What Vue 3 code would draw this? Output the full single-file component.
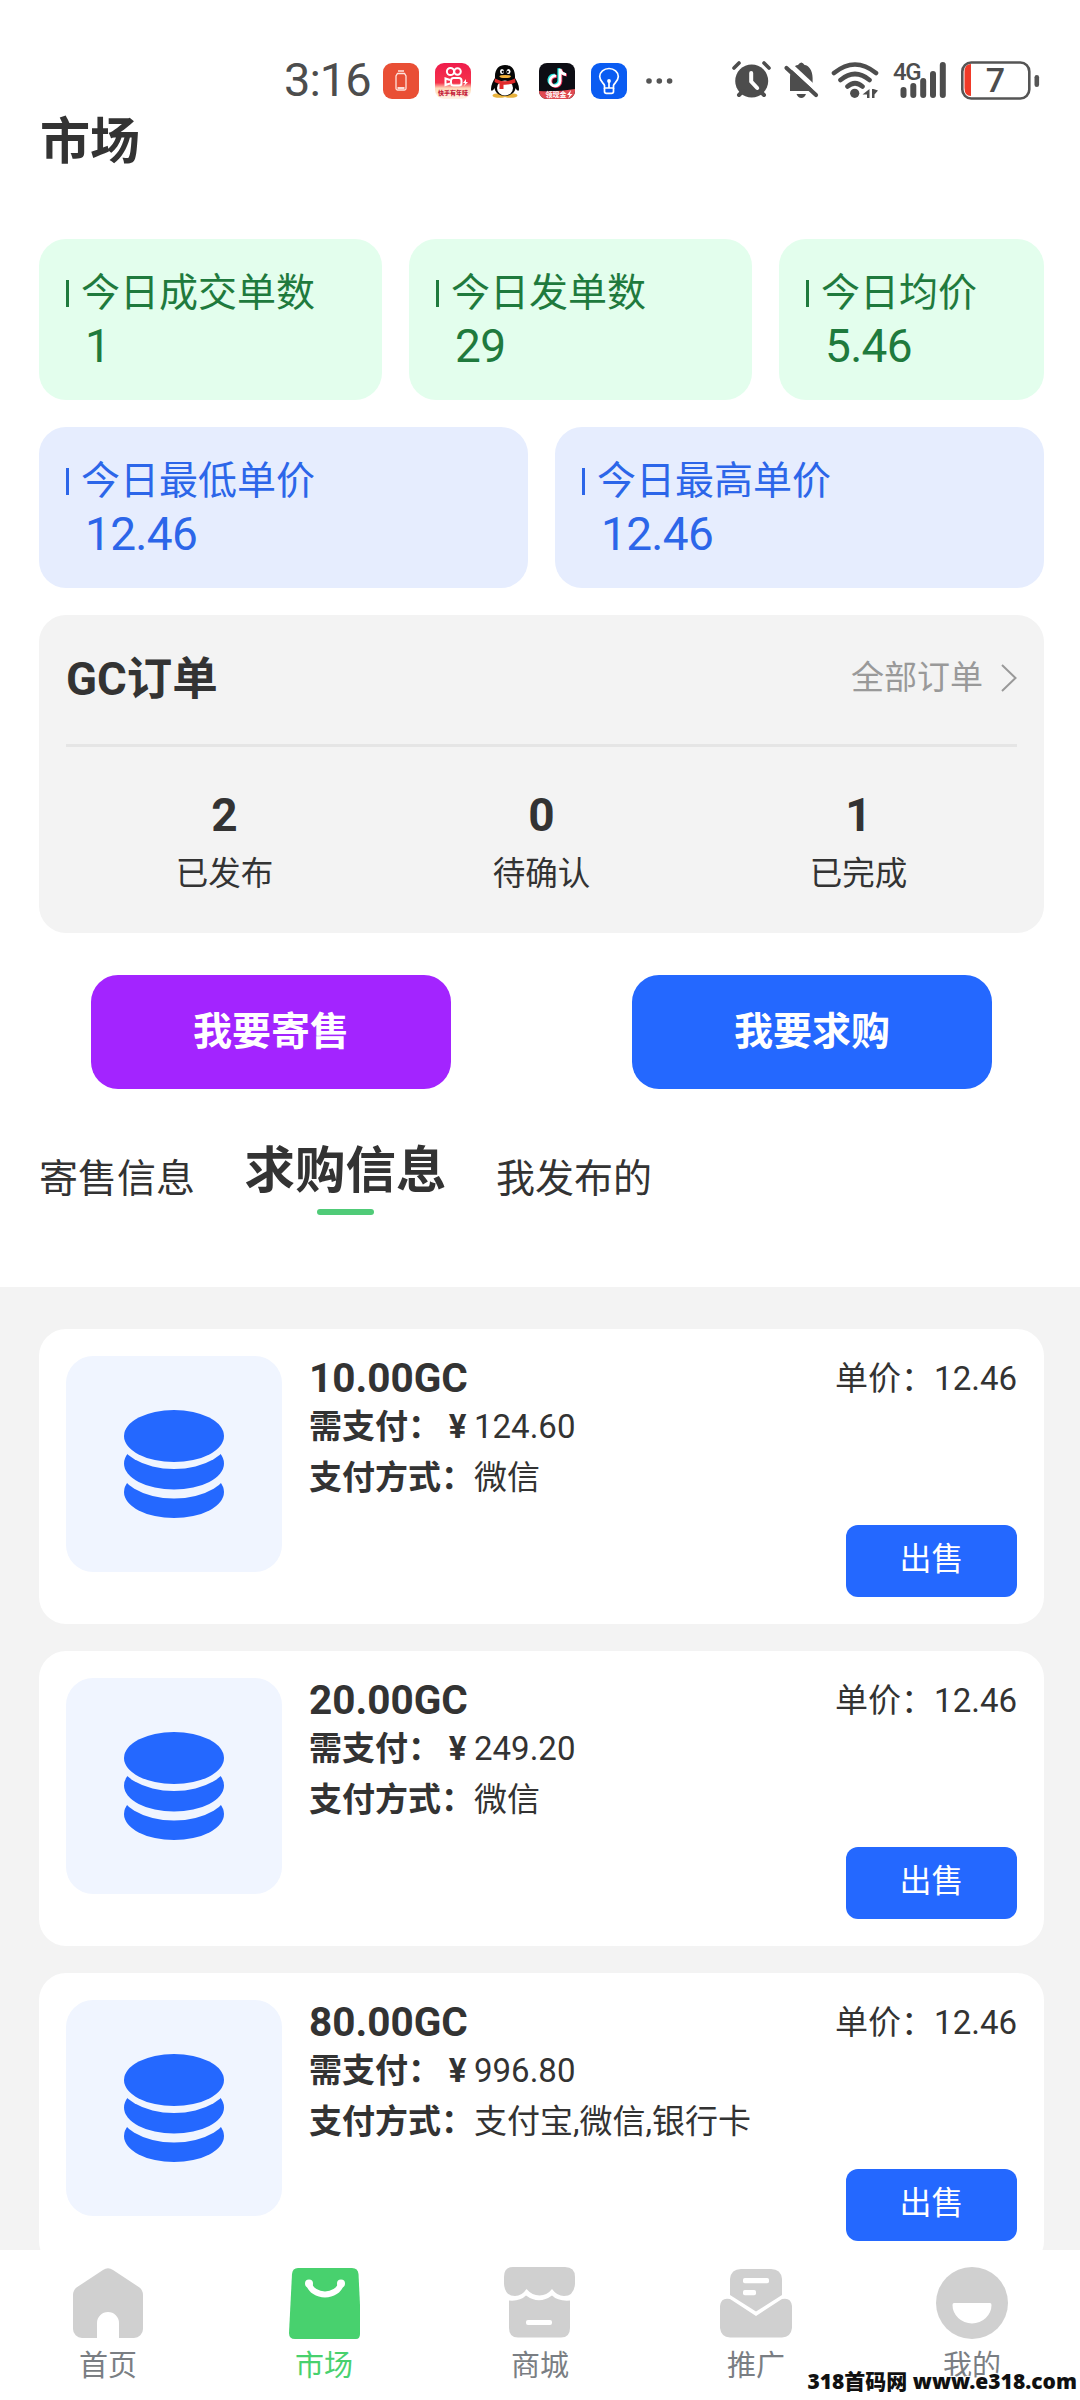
<script setup>
const dayStats = [
  { label: '今日成交单数', value: '1', width: 343 },
  { label: '今日发单数', value: '29', width: 343 },
  { label: '今日均价', value: '5.46', width: 265 },
]
const priceStats = [
  { label: '今日最低单价', value: '12.46' },
  { label: '今日最高单价', value: '12.46' },
]
const orderCounts = [
  { label: '已发布', value: 2 },
  { label: '待确认', value: 0 },
  { label: '已完成', value: 1 },
]
const offers = [
  { amount: '10.00GC', pay: '124.60', method: '微信', price: '12.46' },
  { amount: '20.00GC', pay: '249.20', method: '微信', price: '12.46' },
  { amount: '80.00GC', pay: '996.80', method: '支付宝,微信,银行卡', price: '12.46' },
]
</script>

<template>
  <div class="page">
    <div class="status">
      <span class="clock">3:16</span>
      <div class="apps">
        <svg width="36" height="36" viewBox="0 0 36 36">
          <rect width="36" height="36" rx="9" fill="#e94f35" />
          <path d="M15 8h6M14.500 10.500h7l1.500 2.500v12.500q0 1.500-1.500 1.500h-7q-1.500 0-1.500-1.500V13z" fill="none" stroke="#ffe3dc" stroke-width="1.300" />
          <path d="M14.500 25h7" stroke="#fff" stroke-width="1.600" />
        </svg>
        <svg width="36" height="36" viewBox="0 0 36 36">
          <defs>
            <linearGradient id="ks" x1="0" y1="0" x2="0" y2="1">
              <stop offset="0" stop-color="#ef1c4c" />
              <stop offset=".55" stop-color="#f5334b" />
              <stop offset=".7" stop-color="#ffd9b8" />
              <stop offset="1" stop-color="#fff3e6" />
            </linearGradient>
          </defs>
          <rect width="36" height="36" rx="9" fill="url(#ks)" />
          <g fill="none" stroke="#fff" stroke-width="2">
            <circle cx="15.500" cy="8.500" r="3.600" />
            <circle cx="22.500" cy="8.500" r="3.300" />
            <rect x="16" y="15" width="10.500" height="7.500" rx="2.500" />
            <path d="M15 17l-4.500-1.500v6.500L15 20.500" />
          </g>
          <path d="M31 16l-3 4h2l-1 3 4-4h-2z" fill="#fff" />
          <text x="18" y="32" class="ks-text">快手有年味</text>
        </svg>
        <svg width="36" height="36" viewBox="0 0 36 36">
          <ellipse cx="12.500" cy="32.500" rx="7" ry="2.300" fill="#e8b23c" />
          <ellipse cx="23.500" cy="32.500" rx="7" ry="2.300" fill="#e8b23c" />
          <path d="M8 15C7.500 6 12 2 18 2s10.500 4 10 13c2 3 4 7 4 11 0 3-2 2-3.500-1C28 30 23 33 18 33S8 30 7.500 25C6 28 4 29 4 26c0-4 2-8 4-11z" fill="#060606" />
          <ellipse cx="18" cy="25" rx="8" ry="7.500" fill="#fff" />
          <ellipse cx="15" cy="8.500" rx="2" ry="2.600" fill="#fff" />
          <ellipse cx="21.500" cy="8.500" rx="2" ry="2.600" fill="#fff" />
          <circle cx="15.700" cy="8.800" r="1.100" fill="#000" />
          <circle cx="20.800" cy="8.800" r="1.100" fill="#000" />
          <ellipse cx="18.200" cy="13.500" rx="5.800" ry="1.600" fill="#f2b13a" />
          <path d="M8 15.500q10 5.500 20 0l.5 4q-5 2.500-12 2.200v4.300h-4v-5.200q-3-.5-5-1.800z" fill="#e02a2a" />
        </svg>
        <svg width="36" height="36" viewBox="0 0 36 36">
          <defs><clipPath id="dy"><rect width="36" height="36" rx="8" /></clipPath></defs>
          <g clip-path="url(#dy)">
            <rect width="36" height="36" fill="#0d0d14" />
            <g fill="none" stroke-width="2.800">
              <path d="M17 13a5 5 0 1 0 4 5V6q1 5 6 5.500" stroke="#25e6e0" transform="translate(-1.200 -.8)" />
              <path d="M17 13a5 5 0 1 0 4 5V6q1 5 6 5.500" stroke="#f4325c" transform="translate(.9 .6)" />
              <path d="M17 13a5 5 0 1 0 4 5V6q1 5 6 5.500" stroke="#fff" />
            </g>
            <path d="M0 28Q18 29 36 26v10H0z" fill="#e04a51" />
            <text x="17" y="34" class="dy-text">领现金</text>
            <path d="M32 27l-4 5h2.500l-1.500 4 4.500-5H31z" fill="#fff" />
          </g>
        </svg>
        <svg width="36" height="36" viewBox="0 0 36 36">
          <rect width="36" height="36" rx="9" fill="#0a5cf2" />
          <g fill="none" stroke="#fff" stroke-width="1.700">
            <path d="M13.500 25v-2.500c-.3-2-4.800-4-4.800-9a9.300 8 0 0 1 18.600 0c0 5-4.500 7-4.800 9V25z" />
            <path d="M13.500 25v3.500q0 1.800 2 1.800h5q2 0 2-1.800V25M18 18v7" />
          </g>
          <circle cx="18" cy="18" r="1.900" fill="#fff" />
        </svg>
      </div>
      <svg class="more" width="28" height="8" viewBox="0 0 28 8" fill="#555">
        <circle cx="4" cy="4" r="2.800" /><circle cx="14.300" cy="4" r="2.800" /><circle cx="24.600" cy="4" r="2.800" />
      </svg>
      <svg class="system" width="310" height="52" viewBox="0 -6 310 52" fill="none">
        <g stroke="#4d4d4d" stroke-linecap="round">
          <circle cx="20.700" cy="21" r="16.500" fill="#4d4d4d" stroke="none" />
          <path d="M3 8l5-5M38 8l-5-5" stroke-width="3.600" />
          <path d="M8 35l4-4M33 35l-4-4" stroke-width="4" />
          <path d="M20.200 13v8.500l6 6.500" stroke="#fff" stroke-width="4" />
        </g>
        <path d="M59 31V18c0-8 4-12.500 8-13q3.300-5 6.600 0c4 .5 8 5 8 13v13z" fill="#4d4d4d" />
        <path d="M65.500 34h9.500q-1.500 4-4.700 4t-4.800-4z" fill="#4d4d4d" />
        <path d="M57 3l30 28" stroke="#fff" stroke-width="5" />
        <path d="M55.500 8l29.500 27" stroke="#4d4d4d" stroke-width="4.200" stroke-linecap="round" />
        <g stroke="#4d4d4d" stroke-width="4.600" stroke-linecap="round">
          <path d="M103 13q21-17 42 0M109.500 20q14.500-12 29 0M116.500 26.500q7.500-6.500 15 0" />
        </g>
        <circle cx="123.700" cy="33.300" r="4.600" fill="#4d4d4d" />
        <path d="M138.500 29v9h-2.500v-3.500h-4.500zM141 38v-9h1.500l4.500 1.500-3.500 4V38z" fill="#4d4d4d" />
        <text x="162" y="19.500" class="net">4G</text>
        <g stroke="#4d4d4d" stroke-width="6" stroke-linecap="round">
          <path d="M172.500 30v5M182.300 26v9M192.200 21v14M202 14v21M211.800 5v30" />
        </g>
        <path d="M240 4v32q-6.500 0-6.500-8V12q0-8 6.500-8z" fill="#f03a28" />
        <rect x="231.300" y="2.500" width="67" height="36" rx="9" stroke="#555" stroke-width="2.600" />
        <rect x="303.500" y="15" width="4.600" height="12" rx="2.300" fill="#555" />
        <text x="264.500" y="32" class="level">7</text>
      </svg>
    </div>

    <h1 class="title">市场</h1>

    <div class="summary">
      <div class="row">
        <div v-for="s in dayStats" :key="s.label" class="stat green" :style="{ width: s.width + 'px' }">
          <div class="stat-label"><i></i>{{ s.label }}</div>
          <div class="stat-value">{{ s.value }}</div>
        </div>
      </div>
      <div class="row">
        <div v-for="s in priceStats" :key="s.label" class="stat blue">
          <div class="stat-label"><i></i>{{ s.label }}</div>
          <div class="stat-value">{{ s.value }}</div>
        </div>
      </div>
      <section class="orders">
        <header>
          <h2>GC订单</h2>
          <a>全部订单
            <svg width="16" height="28" viewBox="0 0 16 28" fill="none" stroke="#999" stroke-width="2"><path d="M1 1l13.500 13L1 27" /></svg>
          </a>
        </header>
        <div class="counts">
          <div v-for="o in orderCounts" :key="o.label">
            <b>{{ o.value }}</b>
            <span>{{ o.label }}</span>
          </div>
        </div>
      </section>
    </div>

    <div class="actions">
      <button class="consign">我要寄售</button>
      <button class="buy">我要求购</button>
    </div>

    <div class="tabs">
      <span>寄售信息</span>
      <span class="active">求购信息</span>
      <span>我发布的</span>
    </div>

    <div class="list">
      <article v-for="o in offers" :key="o.amount" class="offer">
        <div class="thumb">
          <svg width="100" height="108" viewBox="0 0 100 108" fill="#2468ff">
            <ellipse cx="50" cy="82" rx="50" ry="26" />
            <ellipse cx="50" cy="55" rx="56" ry="33.500" fill="#f0f5ff" />
            <ellipse cx="50" cy="53.500" rx="50" ry="26" />
            <ellipse cx="50" cy="26" rx="56" ry="33" fill="#f0f5ff" />
            <ellipse cx="50" cy="26" rx="50" ry="26" />
          </svg>
        </div>
        <div class="info">
          <h3>{{ o.amount }}</h3>
          <p class="pay"><b>需支付：</b><b class="yen">¥</b>{{ o.pay }}</p>
          <p class="method"><b>支付方式：</b>{{ o.method }}</p>
        </div>
        <div class="side">
          <span>单价：{{ o.price }}</span>
          <button>出售</button>
        </div>
      </article>
    </div>

    <nav class="tabbar">
      <div>
        <svg viewBox="0 0 72 72" fill="#d0d0d0">
          <path d="M25 71H10a9 9 0 0 1-9-9V28q0-4.500 3.500-7.500L31 3q5-3.500 10 0l26.500 17.500Q71 23.500 71 28v34a9 9 0 0 1-9 9H47V56a11 11 0 0 0-22 0z" />
        </svg>
        <span>首页</span>
      </div>
      <div class="on">
        <svg viewBox="0 0 72 72">
          <path d="M10 1h54q6 0 6.500 6L72 38v29q0 5-4 5H7q-6 0-6-6L4 7q.5-6 6-6z" fill="#48d16e" />
          <path d="M21 17a16.500 14 0 0 0 32 0" fill="none" stroke="#fff" stroke-width="6" />
          <circle cx="21" cy="16.500" r="4" fill="#fff" /><circle cx="53" cy="16.500" r="4" fill="#fff" />
        </svg>
        <span>市场</span>
      </div>
      <div>
        <svg viewBox="0 0 72 72" fill="#d0d0d0">
          <path d="M9 0h52q10 0 10 10v7q-1 12-11 12-7 0-12-7-5 6.500-12.500 6.500T22.500 22q-4.500 7-11.500 7Q1 29 0 17v-7Q0 0 9 0z" />
          <path d="M5 33.500q11 1 17-5 13 9.500 26 0 6 6 18 5V61q0 9.500-9 9.500H14q-9 0-9-9.500z" />
          <rect x="22" y="53" width="26" height="5" rx="2" fill="#fff" />
        </svg>
        <span>商城</span>
      </div>
      <div>
        <svg viewBox="0 0 72 72" fill="#d0d0d0">
          <path d="M10 12Q11 2 21 2h30q10 0 11 10v16L36 44.500 10 28z" />
          <path d="M0 39q1-9 10-7l26 17 26-17q9-2 10 7v22q-1 9-10 9.500H10Q1 70 0 61z" />
          <rect x="23" y="11" width="26" height="5.300" rx="1.800" fill="#fff" />
          <rect x="23" y="23" width="13" height="5.300" rx="1.800" fill="#fff" />
        </svg>
        <span>推广</span>
      </div>
      <div>
        <svg viewBox="0 0 72 72" fill="#d0d0d0">
          <circle cx="36" cy="36" r="36" />
          <path d="M18 36h36q1.500 0 1.500 2a19.500 18.500 0 0 1-39 0q0-2 1.500-2z" fill="#fff" />
        </svg>
        <span>我的</span>
      </div>
    </nav>
    <div class="watermark">318首码网 <em>www.e318.com</em></div>
  </div>
</template>

<style>
body {
  margin: 0;
  background: #fff;
}
</style>

<style scoped>
.page {
  position: relative;
  display: flex;
  flex-direction: column;
  width: 1080px;
  height: 2400px;
  overflow: hidden;
  background: #fff;
  color: #333;
  font-family: Roboto, "Noto Sans CJK SC", sans-serif;
}
h1, h2, h3, p { margin: 0; }
button {
  display: block;
  padding: 0;
  border: 0;
  color: #fff;
  font-family: inherit;
}
svg { display: block; flex: none; }

.status {
  display: flex;
  align-items: center;
  box-sizing: border-box;
  height: 110px;
  padding: 50px 0 0 284px;
}
.clock {
  width: 99px;
  font-size: 47px;
  line-height: 60px;
  letter-spacing: -1px;
  color: #4d4d4d;
}
.apps { display: flex; gap: 16px; margin-top: 2px; }
.more { margin-left: 18px; margin-top: 1px; }
.system { margin-left: 58px; }
.ks-text { font-size: 6px; font-weight: 900; fill: #c4203a; text-anchor: middle; }
.dy-text { font-size: 7px; font-weight: 700; fill: #fff; text-anchor: middle; }
.net { font-size: 24px; font-weight: 500; fill: #4d4d4d; letter-spacing: -1.500px; }
.level { font-size: 34px; font-weight: 500; fill: #4d4d4d; text-anchor: middle; }

.title {
  height: 129px;
  padding-left: 40px;
  font-size: 50px;
  line-height: 64px;
}
.summary {
  display: flex;
  flex-direction: column;
  gap: 27px;
  width: 1005px;
  margin-left: 39px;
}
.row { display: flex; gap: 27px; }
.stat {
  box-sizing: border-box;
  height: 161px;
  padding: 34px 27px 0;
  border-radius: 27px;
}
.green { background: #e3feed; color: #1f7a3d; }
.blue { flex: 1; background: #e6edfe; color: #2c66e9; }
.stat-label {
  display: flex;
  align-items: center;
  gap: 12px;
  font-size: 39px;
  line-height: 41px;
  height: 40px;
  white-space: nowrap;
}
.stat-label i { width: 3px; height: 27px; background: currentColor; margin-top: 1px; }
.stat-value {
  margin: 8px 0 0 19px;
  font-size: 46px;
  line-height: 50px;
  letter-spacing: -0.700px;
}
.orders {
  box-sizing: border-box;
  height: 318px;
  padding: 0 27px;
  border-radius: 27px;
  background: #f3f3f3;
}
.orders header {
  display: flex;
  justify-content: space-between;
  align-items: center;
  height: 129px;
  border-bottom: 3px solid #e5e5e5;
}
.orders h2 { font-size: 45.500px; line-height: 60px; }
.orders a {
  display: flex;
  align-items: center;
  gap: 18px;
  font-size: 33px;
  line-height: 40px;
  margin-bottom: 3px;
  color: #999;
}
.counts { display: flex; padding-top: 43px; }
.counts div {
  flex: 1;
  display: flex;
  flex-direction: column;
  align-items: center;
}
.counts b { font-size: 46px; line-height: 50px; }
.counts span { margin-top: 14px; font-size: 32.500px; line-height: 40px; }

.actions { display: flex; gap: 181px; padding: 42px 0 0 91px; }
.actions button {
  width: 360px;
  height: 114px;
  border-radius: 27px;
  font-size: 39px;
  font-weight: 700;
  line-height: 114px;
}
.consign { background: #a324ff; }
.buy { background: #2468ff; }

.tabs {
  display: flex;
  align-items: flex-end;
  gap: 49.500px;
  box-sizing: border-box;
  height: 198px;
  padding: 0 0 72px 39px;
  font-size: 39px;
  line-height: 71px;
}
.tabs .active { font-size: 50.500px; font-weight: 700; line-height: 70px; }
.tabs .active::after {
  content: "";
  display: block;
  width: 57px;
  height: 6px;
  margin: 3px auto 0;
  border-radius: 3px;
  background: #50cb78;
}

.list {
  flex: 1;
  display: flex;
  flex-direction: column;
  gap: 27px;
  min-height: 0;
  overflow: hidden;
  padding: 42px 36px 0 39px;
  background: #f3f3f3;
}
.offer {
  flex: none;
  display: flex;
  box-sizing: border-box;
  height: 295px;
  padding: 27px;
  border-radius: 27px;
  background: #fff;
  font-size: 33px;
}
.thumb {
  display: flex;
  align-items: center;
  justify-content: center;
  width: 216px;
  height: 216px;
  margin-right: 27px;
  border-radius: 27px;
  background: #f0f5ff;
}
.info { flex: 1; white-space: nowrap; }
.info h3 { font-size: 40.500px; line-height: 45px; height: 46px; }
.pay { line-height: 50px; }
.method { line-height: 52px; }
.yen { display: inline-block; width: 33px; text-align: center; }
.side {
  display: flex;
  flex-direction: column;
  align-items: flex-end;
  justify-content: space-between;
  line-height: 46px;
}
.side button {
  width: 171px;
  height: 72px;
  padding-bottom: 3px;
  border-radius: 12px;
  background: #2468ff;
  font-size: 32px;
  line-height: 69px;
}

.tabbar {
  display: flex;
  height: 150px;
  background: #fff;
}
.tabbar div {
  flex: 1;
  display: flex;
  flex-direction: column;
  align-items: center;
  padding-top: 17px;
  color: #7a7e83;
}
.tabbar svg { width: 72px; height: 72px; }
.tabbar span { margin-top: 10px; font-size: 29px; line-height: 34px; }
.tabbar .on { color: #48d16e; }

.watermark {
  position: absolute;
  right: 3px;
  bottom: 5px;
  font: 900 21px/28px "Noto Sans", "Noto Sans CJK SC", sans-serif;
  color: #111;
  white-space: nowrap;
  text-shadow: 0 0 2px #fff, 1px 1px 1px #fff, -1px -1px 1px #fff, 1px -1px 1px #fff, -1px 1px 1px #fff;
}
.watermark em { font-style: normal; }
</style>
